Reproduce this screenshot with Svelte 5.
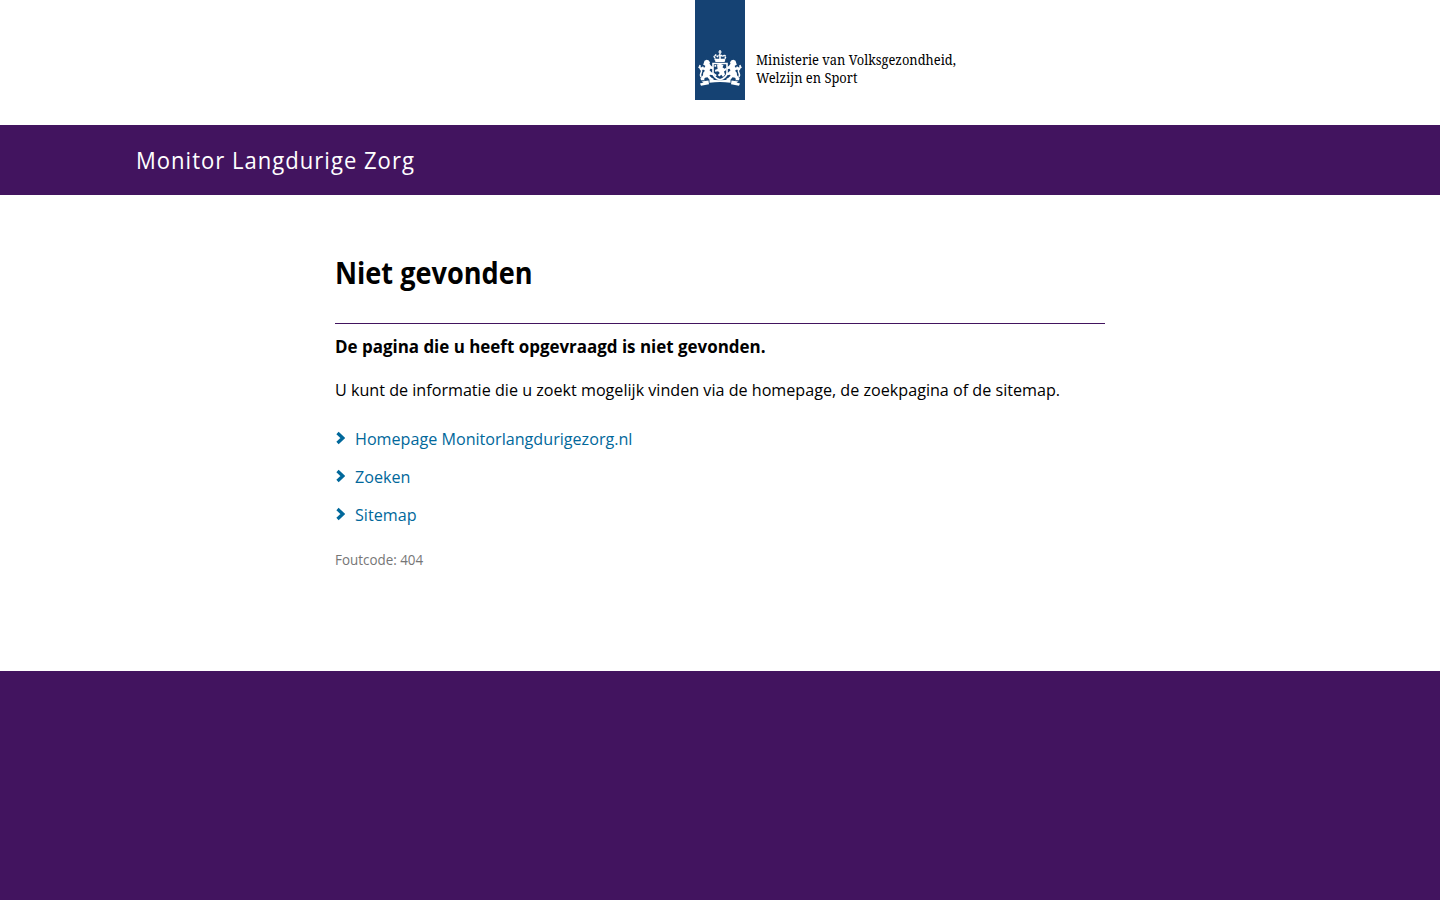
<script>
  const links = ['Homepage Monitorlangdurigezorg.nl', 'Zoeken', 'Sitemap'];
</script>

{#snippet supporter()}
  <path d="M9.500 60.800l2-1 2 .5 1.500 2-.5 1.500 1.500 2 2 1.500v2l-2.500-.5-1 1.500 2 2 2 1-.5 2-3-.5-.5 1 2 2 2 1v1.500l-4-.5-2-2.500-2.500.5-1 1.500 1 1H6l-.5-2 2.500-3 .2-2.500 1.800-2-2-1.200-1.500 1.200-1.200-1 1.700-1.800 3-.7.2-1.500-2-1z" />
  <path d="M6.300 77C3.500 74.500 8 72 6.300 70 4.500 68.500 4.500 67.500 5 65M3.500 66.800l2.500 1.700 2.500-1.500" fill="none" stroke="#fff" stroke-width="1.500" />
{/snippet}

<header class="logo">
  <svg width="50" height="100" viewBox="0 0 50 100" aria-label="Rijksoverheid">
    <rect width="50" height="100" fill="#154273" />
    <g fill="#fff">
      <path d="M24.300 50h1.400v1.500h1v1h-1V54h-1.400v-1.500h-1v-1h1z" />
      <path d="M20.700 60.500l-1.500-4 1.500-1.500 2 1.500 2.300-2 2.300 2 2-1.500 1.500 1.500-1.500 4z" fill="none" stroke="#fff" stroke-width="1.500" stroke-dasharray="2 .5" />
      <path d="M20.300 58.800h9.400v3.200h-9.400zM24.200 55h1.600v5h-1.600z" />
      <path d="M18 63.500h14v10q-.8 4.300-7 6.300-6.200-2-7-6.300z" fill="#154273" stroke="#fff" stroke-width="1.600" />
      <path d="M22 64.500l3.500-.8 3 1.500-1 2 2 1.500 1.800-1v2.300l-2.300 1.500 1 3-2 2.500-1.700-2.200-2 1.700-1.500-1.500 2-2-1.700-1.700-3 .5v-2l2.500-.8zM19.500 65h1.700v1.700h-1.700zM19 73l2.700 2-1 1.500-1.700-2z" />
      {@render supporter()}
      <g transform="matrix(-1 0 0 1 50 0)">{@render supporter()}</g>
      <path d="M14.500 79.500q10.500 1.300 21 0v3.300q-10.500-1.500-21 0z" />
      <path d="M13.500 80.500l-7 1 2 1-3.500 1 1 2.200 8-1.500zM36.500 80.500l7 1-2 1 3.500 1-1 2.200-8-1.500z" />
    </g>
  </svg>
  <p class="ministry"><span>Ministerie van Volksgezondheid,</span><span>Welzijn en Sport</span></p>
</header>
<div class="bar"><span>Monitor Langdurige Zorg</span></div>
<main>
  <h1><span>Niet gevonden</span></h1>
  <h2><span>De pagina die u heeft opgevraagd is niet gevonden.</span></h2>
  <p class="intro"><span>U kunt de informatie die u zoekt mogelijk vinden via de homepage, de zoekpagina of de sitemap.</span></p>
  <ul>
    {#each links as link}
      <li><svg width="10" height="14" viewBox="0 0 10 14"><path d="M2.500 2l5.300 5-5.300 5" fill="none" stroke="#01689b" stroke-width="3.300" /></svg><span>{link}</span></li>
    {/each}
  </ul>
  <p class="code"><span>Foutcode: 404</span></p>
</main>
<footer></footer>

<style>
  :global(body) { background: #fff; font-family: "Open Sans", sans-serif; color: #000; }
  h1, h2, p, ul { margin: 0; padding: 0; }
  span { display: inline-block; white-space: nowrap; transform-origin: 0 50%; }
  .logo { height: 125px; margin-left: 695px; display: flex; }
  .ministry { display: flex; flex-direction: column; margin: 51px 0 0 11px; font: 14px/18px "Noto Serif", "Liberation Serif", serif; }
  .ministry span { transform: scaleX(.921); }
  .bar { height: 70px; background: #42145f; padding-left: 135.500px; line-height: 70px; color: #fff; font-size: 24px; }
  .bar span { letter-spacing: 1.1px; transform: scaleX(.918); }
  main { width: 770px; height: 476px; margin: 0 auto; }
  h1 { height: 129px; border-bottom: 1px solid #42145f; box-sizing: border-box; padding-top: 56px; font-size: 30px; line-height: 44px; margin-bottom: 9px; }
  h1 span { transform: scaleX(.904); }
  h2 { font-size: 18px; line-height: 26px; }
  h2 span { transform: scaleX(.941); }
  .intro { font-size: 17px; line-height: 26px; margin-top: 18px; }
  .intro span, li span { transform: scaleX(.949); }
  ul { list-style: none; margin-top: 16px; }
  li { height: 38px; display: flex; align-items: center; gap: 10px; color: #01689b; font-size: 17px; }
  .code { font-size: 14px; line-height: 20px; margin-top: 17px; color: #767676; }
  .code span { transform: scaleX(.957); }
  footer { height: 229px; background: #42145f; }
</style>
